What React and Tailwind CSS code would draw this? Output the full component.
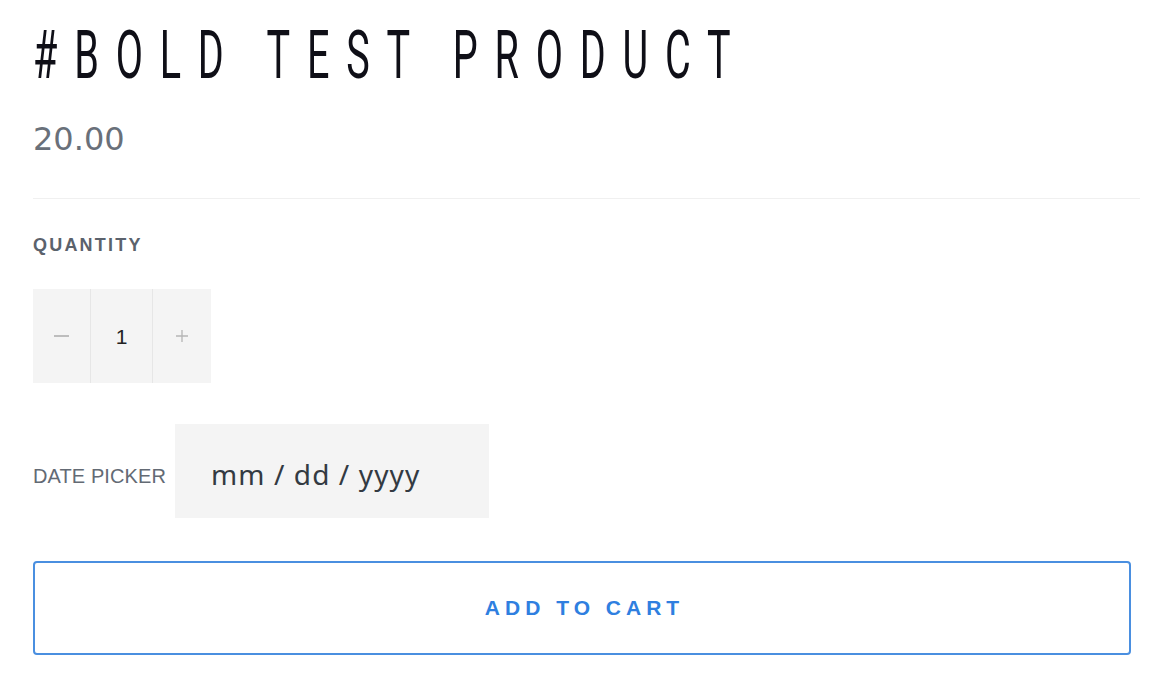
export default function App() {
  return (
    <div className="w-[1164px] h-[692px] bg-white overflow-hidden pl-[33px] pr-[24px] relative">
      <h1
        className="mt-[23px] h-[66px] text-[66px] leading-[66px] font-normal text-[#0f0f17] whitespace-nowrap origin-left scale-x-[0.6] tracking-[28px]"
        style={{ fontFamily: 'Roboto, "Liberation Sans Narrow", sans-serif' }}
      >
        #BOLD TEST PRODUCT
      </h1>
      <div
        className="mt-[34px] h-[32px] text-[32px] leading-[32px] text-[#69707a]"
        style={{ fontFamily: '"DejaVu Sans", sans-serif' }}
      >
        20.00
      </div>
      <div className="mt-[43px] h-px bg-[#f0f0f0] w-[1107px]" />
      <div
        className="mt-[37px] h-[18px] text-[18px] leading-[18px] font-bold text-[#5b626c] tracking-[2.2px]"
        style={{ fontFamily: '"Liberation Sans", sans-serif' }}
      >
        QUANTITY
      </div>
      <div
        className="mt-[35px] flex h-[94px] w-[178px] bg-[#f4f4f4]"
        style={{ fontFamily: '"Liberation Sans", sans-serif' }}
      >
        <div className="w-[58px] flex items-center justify-center border-r border-[#e6e6e6]">
          <div className="w-[15px] h-[2px] bg-[#bdbdbd]" />
        </div>
        <div className="w-[62px] flex items-center justify-center border-r border-[#e6e6e6] text-[21px] leading-[21px] text-[#222]">
          1
        </div>
        <div className="w-[58px] flex items-center justify-center">
          <svg width="14" height="14" viewBox="0 0 14 14">
            <path d="M7 1v12M1 7h12" stroke="#b5b5b5" strokeWidth="1.3" />
          </svg>
        </div>
      </div>
      <div className="mt-[41px] flex items-center h-[94px]">
        <span
          className="mt-[10px] w-[142px] text-[20px] leading-[20px] text-[#636a74] tracking-[0.1px]"
          style={{ fontFamily: '"Liberation Sans", sans-serif' }}
        >
          DATE PICKER
        </span>
        <div
          className="h-[94px] w-[314px] bg-[#f4f4f4] flex items-center pl-[36px] pt-[6px] text-[28px] leading-[28px] text-[#333a42] tracking-[1.1px]"
          style={{ fontFamily: '"Noto Sans", sans-serif' }}
        >
          mm / dd / yyyy
        </div>
      </div>
      <button
        className="mt-[43px] w-[1098px] h-[94px] border-2 border-[#4a8fe0] rounded-[4px] bg-white flex items-center justify-center text-[21px] font-bold text-[#2f7fe0] tracking-[5px] pl-[5px]"
        style={{ fontFamily: '"Liberation Sans", sans-serif' }}
      >
        ADD TO CART
      </button>
    </div>
  );
}
